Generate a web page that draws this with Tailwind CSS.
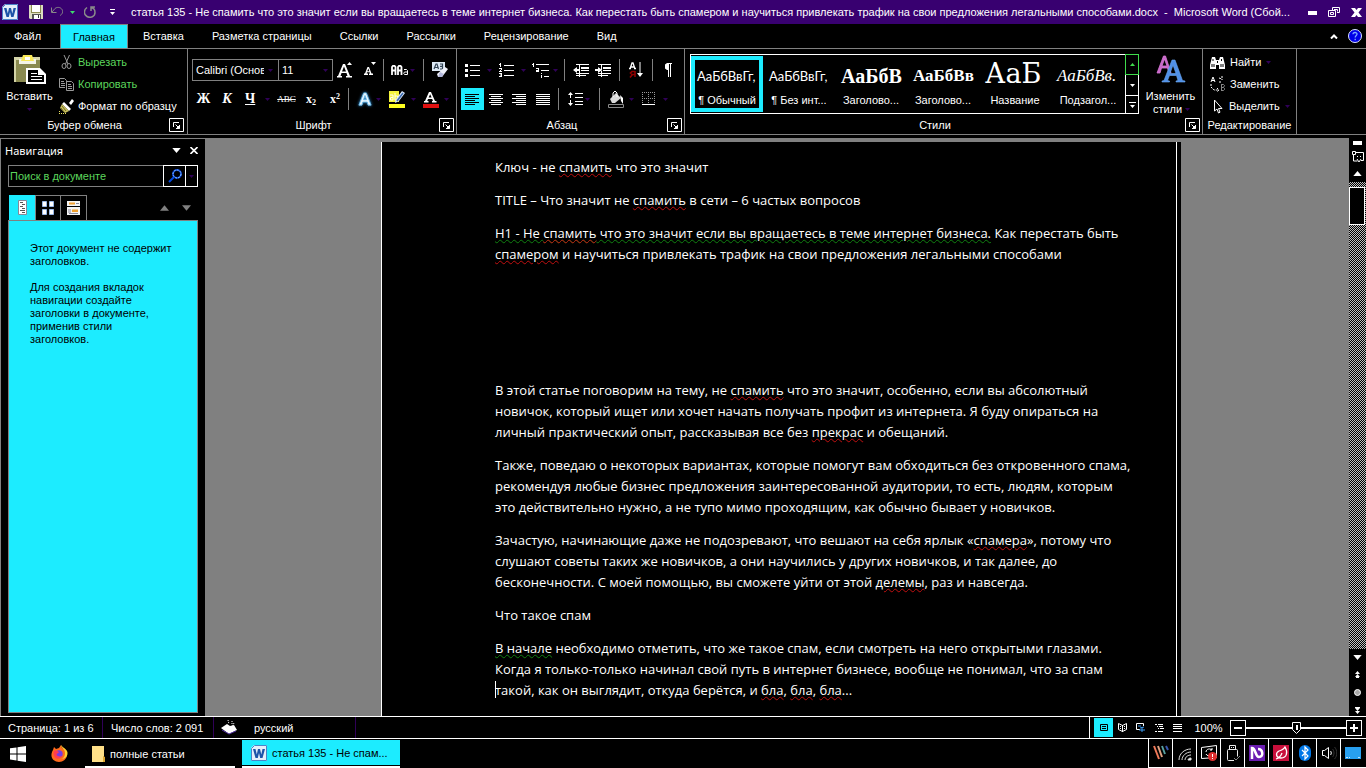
<!DOCTYPE html>
<html lang="ru">
<head>
    <meta charset="UTF-8">
    <meta name="viewport" content="width=device-width, initial-scale=1.0">
    <title>Microsoft Word</title>
    <script src="https://cdn.jsdelivr.net/npm/@tailwindcss/browser@4"></script>
</head>
<body class="h-screen flex flex-col overflow-hidden bg-black text-white text-[11px] leading-4 font-['Liberation_Sans',sans-serif] whitespace-nowrap">

    <!-- Shared glyphs -->
    <svg class="hidden">
        <symbol id="arrow" viewBox="0 0 5 3"><path d="M0 0h5L2.500 3z" fill="currentColor"/></symbol>
        <symbol id="launcher" viewBox="0 0 15 14" fill="none" stroke="#fff">
            <path d="M.5.5h14v13H.5z"/><path d="M4.500 9V4.500H10M6.500 6.500l4 4M10.500 7v3.500H7"/><path d="M8 10h2V8z" fill="#fff"/>
        </symbol>
        <symbol id="word" viewBox="0 0 16 16">
            <path d="M3 0h13v16H0V3z" fill="#e4effa"/><path d="M3.500.5h12v15H.5v-12z" fill="none" stroke="#4b83c9"/>
            <path d="M2 4h2.500l1.300 5.500L7 4h2l1.300 5.500L11.500 4H14l-2.500 9H9.200L8 8l-1.200 5H4.500z" fill="#1d54a8"/>
        </symbol>
    </svg>

    <!-- Title bar -->
    <header class="h-6 shrink-0 flex items-center bg-[#380070] pl-[2px]">
        <svg class="w-4 h-4 shrink-0"><use href="#word"/></svg>
        <button class="ml-[11px]" aria-label="Сохранить">
            <svg class="w-[14px] h-[14px]" viewBox="0 0 14 14"><path d="M0 0h14v14H1l-1-1z" fill="#dcdcc0"/><path d="M3 0h8v7H3z" fill="#fff"/><path d="M2 0h1v7h8V0h1v8H2z" fill="#8c8c50"/><path d="M3 9h9v5H3z" fill="#555"/><path d="M5 10h6v4H5z" fill="#fff"/><path d="M9 10h1v3H9z" fill="#333"/></svg>
        </button>
        <button class="ml-2 flex items-center gap-[7px] text-[#3fdc6c]" aria-label="Отменить">
            <svg class="w-3 h-3" viewBox="0 0 12 12" fill="none" stroke="#888"><path d="M.5 1.500v5h5M1 6l3-3.500C6 .8 9.500 1 11 3.500s0 5-2 6"/></svg>
            <svg class="w-[5px] h-[3px]"><use href="#arrow"/></svg>
        </button>
        <button class="ml-[9px]" aria-label="Повторить">
            <svg class="w-3 h-3" viewBox="0 0 12 12" fill="none" stroke="#8a8a8a" stroke-width="1.500"><path d="M3 1.500C-.5 4-.5 8.500 3 10.500s8 0 8-4S9 1.800 7 1.500M7 5V1h4"/></svg>
        </button>
        <button class="ml-[14px]" aria-label="Настройка панели">
            <svg class="w-[5px] h-[6px]" viewBox="0 0 5 6"><path d="M0 0h5v1H0zM0 3h5L2.500 6z" fill="#fff"/></svg>
        </button>
        <h1 class="ml-4 flex-1">статья 135 - Не спамить что это значит если вы вращаетесь в теме интернет бизнеса. Как перестать быть спамером и научиться привлекать трафик на свои предложения легальными способами.docx&nbsp; - &nbsp;Microsoft Word (Сбой...</h1>
        <div class="flex items-center gap-[11px] pl-4 pr-1">
            <button aria-label="Свернуть"><svg class="w-[9px] h-3" viewBox="0 0 9 12"><path d="M0 5h9v4H0z" fill="#fff"/></svg></button>
            <button aria-label="Восстановить"><svg class="w-3 h-[10px]" viewBox="0 0 12 10" fill="none" stroke="#fff"><path d="M4.500 3V.5h7v5H9M.5 3.500h7v6h-7zM2.500 5.500h3v2h-3zM6 2.500h3.500v2"/></svg></button>
            <button aria-label="Закрыть"><svg class="w-[11px] h-[9px]" viewBox="0 0 11 9"><path d="M0 0h4l1.500 2L7 0h4L7.500 4.500 11 9H7L5.500 7 4 9H0l3.500-4.500z" fill="#fff"/></svg></button>
        </div>
    </header>

    <!-- Ribbon tabs -->
    <nav class="h-[25px] shrink-0 flex items-center border-b border-[#808080]">
        <a href="#" class="w-[60px] pl-[14px]">Файл</a>
        <a href="#" class="w-[68px] h-6 pt-1 text-center bg-[#1cecff] text-black border border-b-0 border-[#808080]">Главная</a>
        <a href="#" class="ml-[15px]">Вставка</a>
        <a href="#" class="ml-7">Разметка страницы</a>
        <a href="#" class="ml-7">Ссылки</a>
        <a href="#" class="ml-7">Рассылки</a>
        <a href="#" class="ml-7">Рецензирование</a>
        <a href="#" class="ml-7">Вид</a>
        <div class="ml-auto flex items-center gap-[10px] pr-1">
            <button aria-label="Свернуть ленту"><svg class="w-2 h-[5px]" viewBox="0 0 8 5" fill="none" stroke="#fff" stroke-width="2"><path d="M1 4.500l3-3 3 3"/></svg></button>
            <button aria-label="Справка"><svg class="w-[14px] h-[14px]" viewBox="0 0 14 14"><circle cx="7" cy="7" r="6.500" fill="#0000e8" stroke="#dce4ff"/><path d="M5 5.200C5 2.800 9.200 3 9 5.300 8.900 6.500 7.200 6.700 7.200 8.500M7.200 9.800v1.400" fill="none" stroke="#7fa8ff" stroke-width="1.300"/></svg></button>
        </div>
    </nav>

    <!-- Ribbon -->
    <div class="h-[86px] shrink-0 flex border-b border-[#808080] text-[#300058]">

        <!-- Clipboard -->
        <section class="w-[188px] border-r border-[#808080] flex flex-col">
            <div class="flex-1 flex">
                <button class="w-[59px] flex flex-col items-center pt-[6px]">
                    <svg class="w-8 h-8" viewBox="0 0 32 32"><path d="M0 2h26v25H0z" fill="#8a8a50"/><path d="M0 2h26v3H0zM0 5h2v22H0z" fill="#d4d4a8"/><path d="M5 4h17v5H5z" fill="#f4f4e8"/><path d="M9 0h9l2 6H7z" fill="#f8e858"/><path d="M11 2h5v3h-5z" fill="#fff"/><path d="M12 13h14l6 6v10H12z" fill="#fff"/><path d="M14 15h10v5h6v7H14z" fill="#000"/><path d="M17 18h6v1h-6zM17 21h11v1H17zM17 24h11v1H17z" fill="#fff"/></svg>
                    <span class="text-white mt-[1px]">Вставить</span>
                    <svg class="w-[5px] h-[3px] mt-1"><use href="#arrow"/></svg>
                </button>
                <div class="flex flex-col gap-[6px] pt-[5px] text-[#5cd65c]">
                    <button class="flex items-center gap-1"><svg class="w-[15px] h-4" viewBox="0 0 15 16" fill="none" stroke="#999"><path d="M5 1l4 9M10.500 1l-4 9"/><ellipse cx="5" cy="12" rx="2" ry="2.500"/><ellipse cx="10" cy="12" rx="2" ry="2.500"/></svg>Вырезать</button>
                    <button class="flex items-center gap-1"><svg class="w-[15px] h-[13px]" viewBox="0 0 15 13" fill="none" stroke="#999"><path d="M6 9.500H.5v-9h5l2 2V4M2 3.500h3M2 5.500h4M2 7.500h4"/><path d="M7.500 3.500h5l2 2v7h-7zM9 6.500h3M9 8.500h4M9 10.500h4"/></svg>Копировать</button>
                    <button class="flex items-center gap-1 text-white"><svg class="w-[15px] h-[15px]" viewBox="0 0 15 15"><path d="M10 4l3-4 2 2-3 4z" fill="#fff"/><path d="M5 3l7 7-2 2-7-7z" fill="#fff"/><path d="M3 5l7 7-4 2-5-5z" fill="#c8c060"/><path d="M3 7l4 5M2 9l3 4" stroke="#706820"/><path d="M0 14.500h7M0 12.500h2" stroke="#e8e060" stroke-dasharray="1 1"/></svg>Формат по образцу</button>
                </div>
            </div>
            <footer class="h-4 flex items-center pr-[3px] mb-[1px] text-white"><span class="flex-1 text-center">Буфер обмена</span><button aria-label="Буфер обмена: параметры"><svg class="w-[15px] h-[14px]"><use href="#launcher"/></svg></button></footer>
        </section>

        <!-- Font -->
        <section class="w-[269px] border-r border-[#808080] flex flex-col">
            <div class="flex-1 pl-1 pt-[10px] flex flex-col gap-[7px]">
                <div class="h-[22px] flex items-center">
                    <div class="relative">
                        <select aria-label="Шрифт" class="w-[87px] h-[22px] appearance-none border border-[#808080] bg-black text-white pl-[3px] pr-[14px]"><option>Calibri (Основн</option></select>
                        <svg class="absolute right-[6px] top-[10px] w-[5px] h-[3px] pointer-events-none"><use href="#arrow"/></svg>
                    </div>
                    <div class="relative -ml-px">
                        <select aria-label="Размер шрифта" class="w-[55px] h-[22px] appearance-none border border-[#808080] bg-black text-white pl-[3px]"><option>11</option></select>
                        <svg class="absolute right-[5px] top-[10px] w-[5px] h-[3px] pointer-events-none"><use href="#arrow"/></svg>
                    </div>
                    <button class="w-[25px] flex justify-center" aria-label="Увеличить размер"><svg class="w-4 h-4" viewBox="0 0 16 16"><path d="M0 14h1L6 2h2l5 12h2v1.500H9V14h1.500L9.500 11h-5L3.500 14H5v1.500H0zM5 9.500h4L7 4.500z" fill="#fff"/><path d="M10 3h5l-2.500-3z" fill="#fff"/></svg></button>
                    <button class="w-[25px] flex justify-center pb-1" aria-label="Уменьшить размер"><svg class="w-3 h-[13px]" viewBox="0 0 12 13"><path d="M0 11.500h1L3.500 5H5l2.500 6.500H9V13H5v-1.500h1l-.4-1.200H3l-.4 1.200H4V13H0zM3.300 9.200h2L4.300 6.500z" fill="#fff"/><path d="M7 0h5L9.500 3z" fill="#fff"/></svg></button>
                    <i class="w-px h-[22px] bg-[#808080]"></i>
                    <button class="w-10 flex items-center justify-center gap-[2px]" aria-label="Регистр"><svg class="w-[17px] h-[10px]" viewBox="0 0 17 10" fill="none" stroke="#fff"><path d="M1 10V2L2 .8h1.500L4.500 2v8M1 5.500h3.500M7 10V2L8 .8h1.500L10.500 2v8M7 5.500h3.500" stroke-width="1.800"/><path d="M13 4.500h2.500l1 1v4h-3l-.8-1.200.8-1.300h3"/></svg><svg class="w-[5px] h-[3px]"><use href="#arrow"/></svg></button>
                    <i class="w-px h-[22px] bg-[#808080]"></i>
                    <button class="w-8 flex justify-center" aria-label="Очистить формат"><svg class="w-4 h-4" viewBox="0 0 16 16"><path d="M0 0h13v9H0z" fill="#dce8f4"/><path d="M2 7l2-5h1l1.500 5M3 5.500h3M8 2h2.500v2.300H8m2.500 0V7H8" fill="none" stroke="#345" stroke-width="1.200"/><path d="M13 5l3 2-6 8-4 0-1-3z" fill="#eef0fa"/><path d="M6 15l4 0 2-3-4-2z" fill="#b4b8dc"/></svg></button>
                </div>
                <div class="h-[22px] flex items-center text-white">
                    <button class="w-[23px] font-bold font-['Liberation_Serif',serif] text-[14px]">Ж</button>
                    <button class="w-6 font-bold italic font-['Liberation_Serif',serif] text-[14px]">К</button>
                    <button class="w-[34px] flex items-center gap-[10px] pl-[6px] font-bold font-['Liberation_Serif',serif] text-[14px]"><u>Ч</u><svg class="w-[5px] h-[3px] text-[#300058]"><use href="#arrow"/></svg></button>
                    <button class="w-[27px] line-through font-['Liberation_Serif',serif] text-[9px]">ABC</button>
                    <button class="w-[22px] font-bold font-['Liberation_Serif',serif] text-[12px]">x<sub class="text-[8px]">2</sub></button>
                    <button class="w-[26px] font-bold font-['Liberation_Serif',serif] text-[12px]">x<sup class="text-[8px]">2</sup></button>
                    <i class="w-px h-[22px] bg-[#808080]"></i>
                    <button class="w-8 flex items-center justify-end gap-1" aria-label="Эффекты текста"><svg class="w-[14px] h-[14px] overflow-visible" viewBox="0 0 16 16"><path d="M1 15L6.500 1h3L15 15h-3.500l-1-3.500h-5L4.500 15zM6.300 8.800h3.400L8 4z" fill="#e8f6ff" stroke="#6ab8e8" stroke-width="1" class="drop-shadow-[0_0_2px_#2a8ad0]"/></svg><svg class="w-[5px] h-[3px] text-[#300058]"><use href="#arrow"/></svg></button>
                    <button class="w-[35px] flex items-center justify-end gap-[6px]" aria-label="Цвет выделения"><svg class="w-4 h-[17px]" viewBox="0 0 16 17"><path d="M0 0h10v11H0z" fill="#f4f43c"/><path d="M1 4h3v5H1.500V6.500H4M6 2v7h2.500V5H6" fill="none" stroke="#fffff0"/><path d="M13 0l3 2-6 8-4 2 1-4z" fill="#dce8f8"/><path d="M14 2L8 10" stroke="#3a6ab0" stroke-width="1.500"/><path d="M0 13h16v4H0z" fill="#ffff20"/></svg><svg class="w-[5px] h-[3px] text-[#300058]"><use href="#arrow"/></svg></button>
                    <button class="w-[33px] flex items-center justify-end gap-[5px]" aria-label="Цвет текста"><svg class="w-4 h-[17px]" viewBox="0 0 16 17"><path d="M1 10h1L6 1h2l4 9h1.500v1.500H9V10h1l-.8-2H5L4.200 10h1.300v1.500H1zM5.600 6.500h3L7.200 3.200z" fill="#fff"/><path d="M0 13h16v4H0z" fill="#e01010"/></svg><svg class="w-[5px] h-[3px] text-[#300058]"><use href="#arrow"/></svg></button>
                </div>
            </div>
            <footer class="h-4 flex items-center pr-[2px] mb-[1px] text-white"><span class="flex-1 text-center">Шрифт</span><button aria-label="Шрифт: параметры"><svg class="w-[15px] h-[14px]"><use href="#launcher"/></svg></button></footer>
        </section>

        <!-- Paragraph -->
        <section class="w-[228px] border-r border-[#808080] flex flex-col">
            <div class="flex-1 pl-1 pt-[10px] flex flex-col gap-[7px]">
                <div class="h-[22px] flex items-center">
                    <button class="w-[34px] flex items-center pl-1 gap-[7px]" aria-label="Маркеры"><svg class="w-[15px] h-[13px]" viewBox="0 0 15 13" fill="#fff"><path d="M0 0h3v3H0zM0 5h3v3H0zM0 10h3v3H0zM5 1h10v1H5zM5 6h10v1H5zM5 11h10v1H5z"/></svg><svg class="w-[5px] h-[3px]"><use href="#arrow"/></svg></button>
                    <button class="w-[34px] flex items-center pl-1 gap-[7px]" aria-label="Нумерация"><svg class="w-[15px] h-[14px]" viewBox="0 0 15 14" fill="#fff"><path d="M1 0h1v4H1zM0 1h1v1H0zM0 5h3v2H2v1h1v1H0V8h1V7h1V6H0zM0 10h3v4H0v-1h2v-.5H1v-1h1V11H0zM5 2h10v1H5zM5 7h10v1H5zM5 12h10v1H5z"/></svg><svg class="w-[5px] h-[3px]"><use href="#arrow"/></svg></button>
                    <button class="w-[35px] flex items-center pl-[3px] gap-1" aria-label="Многоуровневый список"><svg class="w-[17px] h-[15px]" viewBox="0 0 17 15" fill="#fff"><path d="M1 0h1v4H1zM0 1h1v1H0zM4 1h13v1H4zM4 5h3v4H4V7h2V6H4zM9 7h8v1H9zM9 10h1v1H9zM9 12h1v3H9zM12 13h5v1h-5z"/></svg><svg class="w-[5px] h-[3px]"><use href="#arrow"/></svg></button>
                    <i class="w-px h-[22px] bg-[#808080]"></i>
                    <button class="w-7 flex justify-end" aria-label="Уменьшить отступ"><svg class="w-4 h-[13px] mr-1" viewBox="0 0 16 13" fill="#fff"><path d="M3 0h13v1H3zM8 3h8v2H8zM8 6h8v1H8zM3 9h13v1H3zM3 11h10v1H3zM0 6l4-3v2h3v2H4v2zM6 0h1v13H6z"/></svg></button>
                    <button class="w-[26px] flex justify-center pr-[6px]" aria-label="Увеличить отступ"><svg class="w-4 h-[13px]" viewBox="0 0 16 13" fill="#fff"><path d="M3 0h13v1H3zM8 3h8v2H8zM8 6h8v1H8zM3 9h13v1H3zM3 11h10v1H3zM7 6L3 3v2H0v2h3v2zM6 0h1v13H6z"/></svg></button>
                    <i class="w-px h-[22px] bg-[#808080]"></i>
                    <button class="w-8 flex justify-center" aria-label="Сортировка"><svg class="w-[15px] h-4" viewBox="0 0 15 16"><path d="M1 7l2-6h1l2 6M2 5h3M0 6.500h2M5 6.500h2" fill="none" stroke="#fff" stroke-width="1.300"/><path d="M6 9v6M6 9.500H3L1.500 11 3 12.500h3M3.500 12.500L1 15.500" fill="none" stroke="#900000" stroke-width="1.600"/><path d="M11.500 0v12h-1v-12zM8 11h6l-3 4z" fill="#fff"/></svg></button>
                    <i class="w-px h-[22px] bg-[#808080]"></i>
                    <button class="w-[31px] flex justify-center" aria-label="Знаки абзаца"><svg class="w-[7px] h-[14px]" viewBox="0 0 7 14"><path d="M2 0h5v1H6v13H5V1H4v13H3V7H2L0 5.500v-4z" fill="#fff"/></svg></button>
                </div>
                <div class="h-[22px] flex items-center text-white">
                    <button class="w-[23px] h-[22px] flex items-center justify-center bg-[#1cecff]" aria-label="По левому краю"><svg class="w-[15px] h-[11px]" viewBox="0 0 15 11" fill="#000"><path d="M0 0h14v1H0zM0 2h10v1H0zM0 4h14v1H0zM0 6h10v1H0zM0 8h14v1H0zM0 10h10v1H0z"/></svg></button>
                    <button class="w-[23px] flex justify-center" aria-label="По центру"><svg class="w-[14px] h-[11px]" viewBox="0 0 14 11" fill="#fff"><path d="M0 0h14v1H0zM2 2h10v1H2zM0 4h14v1H0zM2 6h10v1H2zM0 8h14v1H0zM2 10h10v1H2z"/></svg></button>
                    <button class="w-6 flex justify-center" aria-label="По правому краю"><svg class="w-[14px] h-[11px]" viewBox="0 0 14 11" fill="#fff"><path d="M0 0h14v1H0zM4 2h10v1H4zM0 4h14v1H0zM4 6h10v1H4zM0 8h14v1H0zM4 10h10v1H4z"/></svg></button>
                    <button class="w-[27px] flex justify-center pr-1" aria-label="По ширине"><svg class="w-[14px] h-[11px]" viewBox="0 0 14 11" fill="#fff"><path d="M0 0h14v1H0zM0 2h14v1H0zM0 4h14v1H0zM0 6h14v1H0zM0 8h14v1H0zM0 10h14v1H0z"/></svg></button>
                    <i class="w-px h-[22px] bg-[#808080]"></i>
                    <button class="w-10 flex items-center pl-[9px] gap-[2px]" aria-label="Интервал"><svg class="w-[15px] h-[14px]" viewBox="0 0 15 14" fill="#fff"><path d="M2 2h1v4H2zM0 3l2.500-3L5 3zM2 8h1v4H2zM0 11h5l-2.500 3zM7 1h8v1H7zM7 5h8v1H7zM7 9h8v1H7zM7 12h8v1H7z"/></svg><svg class="w-[5px] h-[3px] text-[#300058]"><use href="#arrow"/></svg></button>
                    <i class="w-px h-[22px] bg-[#808080]"></i>
                    <button class="w-[36px] flex items-center pl-2 gap-[5px]" aria-label="Заливка"><svg class="w-4 h-[17px]" viewBox="0 0 16 17"><path d="M2 8l6-6 5 5-6 5H4z" fill="#d8d8d8"/><path d="M5 6V2l2-2 2 2v4" fill="none" stroke="#fff"/><path d="M12 4l3 3v6l-2-3z" fill="#fff"/><path d="M.5 13.500h15v3H.5z" fill="none" stroke="#888"/></svg><svg class="w-[5px] h-[3px] text-[#300058]"><use href="#arrow"/></svg></button>
                    <button class="w-[32px] flex items-center pl-[6px] gap-[7px]" aria-label="Границы"><svg class="w-[14px] h-[14px]" viewBox="0 0 14 14" fill="none" stroke="#999"><path d="M.5 0v12M6.500 0v12M12.500 0v12M0 .5h13M0 6.500h13" stroke-dasharray="1 1"/><path d="M0 12.500h13" stroke="#fff"/></svg><svg class="w-[5px] h-[3px] text-[#300058]"><use href="#arrow"/></svg></button>
                </div>
            </div>
            <footer class="h-4 flex items-center pr-[2px] mb-[1px] text-white"><span class="flex-1 text-center">Абзац</span><button aria-label="Абзац: параметры"><svg class="w-[15px] h-[14px]"><use href="#launcher"/></svg></button></footer>
        </section>

        <!-- Styles -->
        <section class="w-[518px] border-r border-[#808080] flex flex-col">
            <div class="flex-1 flex pt-[5px] pl-[5px]">
                <div class="h-[60px] flex border border-white text-white">
                    <button class="w-[72px] my-px border-4 border-[#1cecff] flex flex-col"><span class="h-8 flex items-center pl-[2px] w-full font-['Lato',sans-serif] text-[13px]">АаБбВвГг,</span><span class="w-full text-center">¶ Обычный</span></button>
                    <button class="w-[72px] pt-[5px] px-1 flex flex-col"><span class="h-8 flex items-center pl-[2px] w-full font-['Lato',sans-serif] text-[13px]">АаБбВвГг,</span><span class="w-full text-center">¶ Без инт...</span></button>
                    <button class="w-[72px] pt-[5px] px-[6px] flex flex-col"><span class="h-8 flex items-center w-full font-['Liberation_Serif',serif] font-bold text-[20px]">АаБбВ</span><span class="w-full text-center">Заголово...</span></button>
                    <button class="w-[72px] pt-[5px] px-[6px] flex flex-col"><span class="h-8 flex items-center w-full font-['Liberation_Serif',serif] font-bold text-[17px]">АаБбВв</span><span class="w-full text-center">Заголово...</span></button>
                    <button class="w-[72px] pt-[5px] px-[6px] flex flex-col"><span class="h-8 flex items-center w-full pb-1 font-['DejaVu_Serif',serif] text-[27px]">АаБ</span><span class="w-full text-center">Название</span></button>
                    <button class="w-[74px] pt-[5px] px-[6px] flex flex-col"><span class="h-8 flex items-center w-full font-['Liberation_Serif',serif] italic text-[17px]">АаБбВв.</span><span class="w-full text-center">Подзагол...</span></button>
                    <div class="w-[14px] flex flex-col -my-px -mr-px">
                        <button class="h-[21px] flex items-center justify-center border border-[#3fdc4c] text-[#3fdc4c]" aria-label="Вверх"><svg class="w-[5px] h-[3px] rotate-180"><use href="#arrow"/></svg></button>
                        <button class="h-5 flex items-center justify-center border-x border-white" aria-label="Вниз"><svg class="w-[5px] h-[3px]"><use href="#arrow"/></svg></button>
                        <button class="h-[19px] flex items-center justify-center border border-white" aria-label="Дополнительно"><svg class="w-[7px] h-[6px]" viewBox="0 0 7 6"><path d="M0 0h7v1H0zM1 3h5L3.500 6z" fill="#fff"/></svg></button>
                    </div>
                </div>
                <button class="flex-1 flex flex-col items-center text-white leading-[13px]">
                    <svg class="w-[30px] h-7 mt-[1px]" viewBox="0 0 30 28"><path d="M1 18L7.500 1h2L15 18h-2l-1.500-5h-6L4 18zM6 11h5L8.500 4z" fill="#c868c8" stroke="#d878d8" stroke-width=".8"/><path d="M6 27v-1l2-.5L16 5h3l7.500 20.500 2.500.5v1h-9v-1l2-.5-1.500-5h-7L11.500 25.500l2 .5v1zM14 18.500h6L17 10z" fill="#5090e8" stroke="#6aa8f4" stroke-width=".6"/></svg>
                    <span class="mt-[7px]">Изменить</span>
                    <span class="flex items-center gap-[3px] pl-[2px]">стили<svg class="w-[5px] h-[3px] text-[#300058]"><use href="#arrow"/></svg></span>
                </button>
            </div>
            <footer class="h-4 flex items-center pr-[2px] mb-[1px] text-white"><span class="flex-1 text-center">Стили</span><button aria-label="Стили: параметры"><svg class="w-[15px] h-[14px]"><use href="#launcher"/></svg></button></footer>
        </section>

        <!-- Editing -->
        <section class="w-[94px] border-r border-[#808080] flex flex-col text-white">
            <div class="flex-1 flex flex-col gap-[6px] pt-[5px] pl-[7px]">
                <button class="flex items-center gap-[5px]"><svg class="w-[15px] h-[13px]" viewBox="0 0 15 13"><path d="M2 1h3l1 3h3l1-3h3l2 8v4H9V9H6v4H0V9z" fill="#fff"/><path d="M3 3v2M11.500 3v2M2 8v3M4 8v3M11 8v3M13 8v3M7.500 5v2" stroke="#000"/></svg>Найти<svg class="w-[5px] h-[3px] text-[#300058]"><use href="#arrow"/></svg></button>
                <button class="flex items-center gap-[5px]"><svg class="w-[15px] h-4" viewBox="0 0 15 16" fill="none"><path d="M1 6l2-5 2 5M2 4.500h3" stroke="#fff"/><path d="M1 8v3l3 3h4M7 12l2 2-2 2M9 2l3 1M12 0v4M10 5v3" stroke="#fff" stroke-dasharray="2 1"/><path d="M11.500 8v7M11.500 8.500h2l1 1-1 2h-2M13.500 11.500l1 1v1l-1 1h-2" stroke="#888"/></svg>Заменить</button>
                <button class="flex items-center gap-[5px]"><svg class="w-[14px] h-[15px]" viewBox="0 0 14 15"><path d="M4.500 1v11l2.500-2 1.500 4 1.500-.8L8.500 9.500H12z" fill="none" stroke="#fff"/></svg>Выделить<svg class="w-[5px] h-[3px] text-[#300058]"><use href="#arrow"/></svg></button>
            </div>
            <footer class="h-4 mb-[1px] text-center">Редактирование</footer>
        </section>
    </div>

    <!-- Workspace -->
    <main class="flex-1 min-h-0 flex bg-[#808080] mt-[3px]">
        <aside class="w-[205px] bg-black border-l border-t border-[#808080] flex flex-col pb-[3px]">
            <div class="h-[26px] flex items-center pl-1 pr-[7px] pb-[3px] font-['Noto_Sans',sans-serif]">
                <h2 class="flex-1">Навигация</h2>
                <button aria-label="Меню панели"><svg class="w-[9px] h-[5px]"><use href="#arrow"/></svg></button>
                <button class="ml-[9px]" aria-label="Закрыть панель"><svg class="w-2 h-[7px]" viewBox="0 0 8 7"><path d="M.5 0L7.500 7M7.500 0L.5 7" stroke="#fff" stroke-width="1.600"/></svg></button>
            </div>
            <form class="flex ml-[7px] mr-[7px] h-[22px]">
                <input type="text" aria-label="Поиск" placeholder="Поиск в документе" class="flex-1 min-w-0 border border-r-0 border-[#808080] pl-[1px] placeholder:text-[#5cd65c]">
                <button type="button" class="w-[23px] border border-white flex items-center justify-center" aria-label="Найти"><svg class="w-[14px] h-[14px]" viewBox="0 0 14 14" fill="none"><circle cx="9" cy="5" r="4" stroke="#0038d0" stroke-width="2"/><circle cx="9" cy="5" r="4" stroke="#9cd8ff" stroke-dasharray="2 1"/><path d="M6 8l-5 5" stroke="#0048e0" stroke-width="2"/></svg></button>
                <button type="button" class="w-3 border border-l-0 border-white flex items-center justify-center text-[#300058]" aria-label="Параметры поиска"><svg class="w-[5px] h-[3px]"><use href="#arrow"/></svg></button>
            </form>
            <div class="ml-2 mt-2 h-[25px] flex items-center pr-[14px]">
                <button class="w-[26px] h-full bg-[#1cecff] flex items-center justify-center" aria-label="Заголовки"><svg class="w-[9px] h-[15px]" viewBox="0 0 9 15"><path d="M.5.5h8v14h-8z" fill="#fff" stroke="#889"/><path d="M2 2.500h3M4 4.500h3M2 6.500h3M4 8.500h3M2 10.500h5M4 12.500h3" stroke="#555"/></svg></button>
                <button class="w-[26px] h-full border border-b-0 border-[#808080] flex items-center justify-center" aria-label="Страницы"><svg class="w-3 h-[14px]" viewBox="0 0 12 14" fill="#fff" stroke="#9ab8e8"><path d="M.5.500h4v5h-4zM7.500.5h4v5h-4zM.5 8.500h4v5h-4zM7.500 8.500h4v5h-4z"/></svg></button>
                <button class="w-[27px] h-full -ml-px border border-b-0 border-[#808080] flex items-center justify-center" aria-label="Результаты"><svg class="w-[13px] h-[14px]" viewBox="0 0 13 14"><path d="M0 0h13v5H0zM0 6h13v8H0z" fill="#f4f4f4"/><path d="M2 1.500h6v2H2zM5 8.500h6v2.500H5z" fill="#f0a030"/><path d="M9 2.500h3M1 9h3M1 11h3M2 12.500h9" stroke="#889"/></svg></button>
                <div class="ml-auto flex gap-[13px] text-[#808080]">
                    <button aria-label="Предыдущий"><svg class="w-[9px] h-[6px] rotate-180"><use href="#arrow"/></svg></button>
                    <button aria-label="Следующий"><svg class="w-[9px] h-[6px]"><use href="#arrow"/></svg></button>
                </div>
            </div>
            <div class="flex-1 mx-[7px] bg-[#1cecff] border border-[#808080] text-black pl-[21px] pt-[21px] leading-[13px]">
                <p class="mb-[13px]">Этот документ не содержит<br>заголовков.</p>
                <p>Для создания вкладок<br>навигации создайте<br>заголовки в документе,<br>применив стили<br>заголовков.</p>
            </div>
        </aside>

        <div class="flex-1 flex justify-center pt-1 pl-2 overflow-hidden">
            <article class="w-[800px] bg-black border-l border-white pr-1">
                <div class="h-full border-r border-white pl-[113px] pt-[15px] text-[13px] leading-[21px] font-['Open_Sans','Noto_Sans',sans-serif] [&_p]:mb-3 [&_s]:underline [&_s]:decoration-wavy [&_s]:decoration-[#c01010] [&_s]:decoration-1 [&_u]:decoration-wavy [&_u]:decoration-[#108010] [&_u]:decoration-1">
                    <p>Ключ - не <s>спамить</s> что это значит</p>
                    <p>TITLE – Что значит не <s>спамить</s> в сети – 6 частых вопросов</p>
                    <p><u>H1 - Не <s>спамить</s> что это значит если вы вращаетесь в теме интернет бизнеса.</u> Как перестать быть<br><s>спамером</s> и научиться привлекать трафик на свои предложения легальными способами</p>
                    <p class="mt-[115px]">В этой статье поговорим на тему, не <s>спамить</s> что это значит, особенно, если вы абсолютный<br>новичок, который ищет или хочет начать получать профит из интернета. Я буду опираться на<br>личный практический опыт, рассказывая все без <s>прекрас</s> и обещаний.</p>
                    <p>Также, поведаю о некоторых вариантах, которые помогут вам обходиться без откровенного спама,<br>рекомендуя любые бизнес предложения заинтересованной аудитории, то есть, людям, которым<br>это действительно нужно, а не тупо мимо проходящим, как обычно бывает у новичков.</p>
                    <p>Зачастую, начинающие даже не подозревают, что вешают на себя ярлык «<s>спамера</s>», потому что<br>слушают советы таких же новичков, а они научились у других новичков, и так далее, до<br>бесконечности. С моей помощью, вы сможете уйти от этой <s>делемы</s>, раз и навсегда.</p>
                    <p>Что такое спам</p>
                    <p><u>В начале</u> необходимо отметить, что же такое спам, если смотреть на него открытыми глазами.<br>Когда я только-только начинал свой путь в интернет бизнесе, вообще не понимал, что за спам<br><span class="relative"><i class="absolute left-0 top-0 w-px h-[17px] bg-white"></i>такой</span>, как он выглядит, откуда берётся, и <s>бла</s>, <s>бла</s>, <s>бла</s>...</p>
                </div>
            </article>
        </div>

        <!-- Vertical scroll bar -->
        <div class="w-[17px] bg-black flex flex-col items-center">
            <i class="w-[9px] h-1 mt-[3px] bg-white shrink-0"></i>
            <button class="mt-[6px]" aria-label="Линейка"><svg class="w-3 h-3" viewBox="0 0 12 12" fill="none" stroke="#fff"><path d="M1.500 3v7h4M4 1.500h7.500v8H9M.5.5h3v3h-3z"/><path d="M5 8l2 3 2-3M5 5l1 1M8 5l1 1"/></svg></button>
            <button class="mt-2" aria-label="Прокрутить вверх"><svg class="w-[9px] h-[5px] rotate-180"><use href="#arrow"/></svg></button>
            <div class="flex-1 w-full mt-[6px] pt-[5px] bg-[repeating-conic-gradient(#c0c0c0_0_25%,#000_0_50%)] bg-[length:2px_2px]"><div class="w-4 h-[38px] bg-black border border-white"></div></div>
            <div class="h-[67px] flex flex-col items-center pt-[6px] gap-[11px]">
                <button aria-label="Прокрутить вниз"><svg class="w-[9px] h-[5px]"><use href="#arrow"/></svg></button>
                <button aria-label="Предыдущая страница"><svg class="w-[5px] h-[7px]" viewBox="0 0 5 7" fill="#fff"><path d="M0 3l2.500-3L5 3zM0 6l2.500-3L5 6zM1 6h3v1H1z"/></svg></button>
                <button aria-label="Объект перехода"><svg class="w-[7px] h-[7px]" viewBox="0 0 7 7"><circle cx="3.500" cy="3.500" r="3" fill="#aaa" stroke="#fff"/></svg></button>
                <button aria-label="Следующая страница"><svg class="w-[5px] h-[7px]" viewBox="0 0 5 7" fill="#fff"><path d="M0 1l2.500 3L5 1zM0 4l2.500 3L5 4zM0 0h5v1H0z"/></svg></button>
            </div>
        </div>
    </main>

    <!-- Status bar -->
    <div class="h-[23px] shrink-0 flex items-center border-y border-white">
        <button class="w-[103px] h-full pl-2 text-left border-r border-[#300058]">Страница: 1 из 6</button>
        <button class="w-[111px] h-full pl-2 text-left border-r border-[#300058]">Число слов: 2 091</button>
        <button class="w-[142px] h-full pl-[7px] flex items-center gap-[17px] border-r border-[#300058]"><svg class="w-4 h-[15px]" viewBox="0 0 16 15"><path d="M0 8l6-4 3 2 4-1 3 5-8 4z" fill="#fff"/><path d="M1 10l7 4 7-3" fill="none" stroke="#5030a0"/><path d="M7 0l1 4M11 1v4M13 3l-2 4" stroke="#fff" stroke-dasharray="1 1"/></svg>русский</button>
        <div class="ml-auto h-full flex items-center border-l border-white pl-1 pr-1">
            <button class="w-[19px] h-[19px] bg-[#1cecff] flex items-center justify-center" aria-label="Разметка страницы"><svg class="w-2 h-[7px]" viewBox="0 0 8 7" fill="none" stroke="#000"><path d="M.5.5h7v6h-7zM2 2.500h4M2 4.500h4"/></svg></button>
            <button class="w-[18px] flex justify-center" aria-label="Режим чтения"><svg class="w-[9px] h-[9px]" viewBox="0 0 9 9" fill="none" stroke="#fff"><path d="M.5.5l4 2 4-2v6l-4 2-4-2zM4.500 2v7M2 3l1 1M7 3L6 4M2 5l1 1M7 5L6 6"/></svg></button>
            <button class="w-[19px] flex justify-center" aria-label="Веб-документ"><svg class="w-[9px] h-[9px]" viewBox="0 0 9 9" fill="none"><path d="M4 6.500H.5v-6h7V3" stroke="#fff"/><path d="M2 3h3M4 5l4-1M6 4v5M3 7h6" stroke="#3a9af0"/></svg></button>
            <button class="w-[18px] flex justify-center" aria-label="Структура"><svg class="w-[9px] h-[8px]" viewBox="0 0 9 8" fill="#fff"><path d="M0 0h2v1H0zM3 0h5v1H3zM2 2h1v1H2zM4 2h4v1H4zM3 4h1v1H3zM5 4h4v1H5zM0 7h2v1H0zM3 7h5v1H3z"/></svg></button>
            <button class="w-[19px] flex justify-center" aria-label="Черновик"><svg class="w-[9px] h-[8px]" viewBox="0 0 9 8" fill="#fff"><path d="M0 0h9v1H0zM0 2h9v1H0zM0 4h9v1H0zM0 7h9v1H0z"/></svg></button>
            <button class="w-[43px] text-center">100%</button>
            <button class="w-4 h-4 border border-white flex items-center justify-center" aria-label="Уменьшить масштаб"><i class="w-2 h-[2px] bg-white"></i></button>
            <div class="relative w-[100px] h-4 flex items-center">
                <i class="w-full h-[2px] bg-white"></i>
                <svg class="absolute left-[46px] top-[2px] w-[9px] h-3" viewBox="0 0 9 12"><path d="M.5.5h8v7l-4 4-4-4z" fill="#000" stroke="#fff"/><path d="M4 3h2v5H4z" fill="#fff"/></svg>
                <input type="range" min="0" max="100" value="50" aria-label="Масштаб" class="absolute inset-0 w-full opacity-0">
            </div>
            <button class="w-4 h-4 border border-white flex items-center justify-center" aria-label="Увеличить масштаб"><svg class="w-2 h-2" viewBox="0 0 8 8" fill="#fff"><path d="M3 0h2v3h3v2H5v3H3V5H0V3h3z"/></svg></button>
        </div>
    </div>

    <!-- Taskbar -->
    <footer class="h-[29px] shrink-0 flex items-center">
        <button class="w-9 flex justify-center" aria-label="Пуск"><svg class="w-4 h-4" viewBox="0 0 16 16" fill="#fff"><path d="M0 2.300L6.500 1.400v6H0zM7.500 1.200L16 0v7.400H7.500zM0 8.500h6.500v6L0 13.600zM7.500 8.500H16V16l-8.500-1.200z"/></svg></button>
        <button class="w-[49px] flex justify-center pr-[2px]" aria-label="Firefox"><svg class="w-[17px] h-[17px]" viewBox="0 0 17 17"><path d="M2 5l1-3 2 2 3-1 2-3 1 3 3 1c3 4 2.500 8-.5 11-3 2.500-8 2.500-11 0C0 12.500-.3 9 2 5z" fill="#ff6a1c"/><path d="M10 0c0 3 4 4 4 8s-2 6-5 6c3 0 8-1 7.500-6.500C16 4 12 3 10 0z" fill="#ffd030"/><circle cx="8" cy="9" r="3.700" fill="#7a3ce0"/><path d="M3 6c2-1 4 0 5 1.500L5.500 9c.5 3 4 3 6 1.500-1 3-5 4-7 2.500S2 8 3 6z" fill="#ff3c50"/></svg></button>
        <button class="w-[150px] h-full pt-[2px] flex items-center gap-[5px] pl-[7px] border-b-2 border-white"><svg class="w-[13px] h-4" viewBox="0 0 13 16"><path d="M0 0h12v11l1 1v4H0z" fill="#ffe088"/><path d="M11 10v6h2v-5z" fill="#e0a830"/></svg>полные статьи</button>
        <button class="w-[158px] h-full ml-[7px] pt-px flex flex-col border-b-2 border-white"><span class="h-[25px] w-full bg-[#1cecff] text-black flex items-center gap-[5px] pl-[9px]"><svg class="w-4 h-4"><use href="#word"/></svg>статья 135 - Не спам...</span></button>
        <div class="ml-auto h-[29px] flex border-b border-white [&>button]:w-6 [&>button]:flex [&>button]:items-center [&>button]:justify-center [&>button]:border-l [&>button]:border-white [&_svg]:w-4 [&_svg]:h-4">
            <button aria-label="Punto"><svg viewBox="0 0 16 16" stroke-width="2"><path d="M1 1l5 13" stroke="#f07858"/><path d="M5 1l4 11" stroke="#e0a080"/><path d="M9 1l3 8" stroke="#58a0a0"/><path d="M13 1l2 4" stroke="#3858b0"/></svg></button>
            <button aria-label="Сеть"><svg viewBox="0 0 16 16" fill="none" stroke="#ddd"><path d="M2 15C2 9 7 4 14 4M5 15c0-4 4-8 9-8M8 15c0-3 3-5 6-5"/><path d="M11 15c0-1 1-2 3-2v2z" fill="#fff"/></svg></button>
            <button aria-label="Обновления"><svg viewBox="0 0 16 16" fill="none" stroke="#fff"><path d="M.5 2.500l15-2v12l-15 1z"/><path d="M5 7c0-3 4-4 6-2M11 3v2H9M5 9c1 2 3 2 4 1"/><circle cx="11.500" cy="11.500" r="4.500" fill="#e03030" stroke="none"/><path d="M11.500 9v3M11.500 13v1"/></svg></button>
            <button aria-label="USB"><svg viewBox="0 0 16 16" fill="none" stroke="#eee"><path d="M4.500 4.500v-4h6v4M2.500 5.500q0-1 1-1h8q1 0 1 1v6M2.500 5.500v9q0 1 1 1H9M6 2.500h1M8 2.500h1"/><path d="M9 13l2 2 4-4" stroke="#888"/></svg></button>
            <button aria-label="OneNote"><svg viewBox="0 0 16 16"><path d="M0 0h16v16H0z" fill="#6a1cb0"/><path d="M3 14V3c4 0 3 9 7 9 5 0 4-8-1-8" fill="none" stroke="#fff" stroke-width="2.500"/></svg></button>
            <button aria-label="Антивирус"><svg viewBox="0 0 16 16"><path d="M0 0h16v16H0z" fill="#c8103c"/><path d="M12 2c3 5 2 11-4 11-5 0-6-5-2-7 3-1 5-2 6-4zM3 14c3-1 5-3 6-6" fill="none" stroke="#fff" stroke-width="1.300"/></svg></button>
            <button aria-label="Bluetooth"><svg viewBox="0 0 16 16"><rect x="2" width="12" height="16" rx="6" fill="#0078e8"/><path d="M5 5l6 6-3 3V2l3 3-6 6" fill="none" stroke="#fff" stroke-width="1.200"/></svg></button>
            <button aria-label="Громкость"><svg viewBox="0 0 16 16" fill="none" stroke="#fff"><path d="M1.500 5.500h2l4-3v11l-4-3h-2zM9.500 6c1 1 1 3 0 4"/><path d="M11.500 4c2 2 2 6 0 8M13.500 2c3 3 3 9 0 12" stroke="#333"/></svg></button>
            <button class="mr-[2px]" aria-label="Рабочий стол"><svg viewBox="0 0 16 16"><path d="M0 2h16v12H0z" fill="#28a0f0"/><path d="M1 12.500h2M4 12.500h1M13 12.500h2" stroke="#bfe4ff"/></svg></button>
        </div>
    </footer>
</body>
</html>
